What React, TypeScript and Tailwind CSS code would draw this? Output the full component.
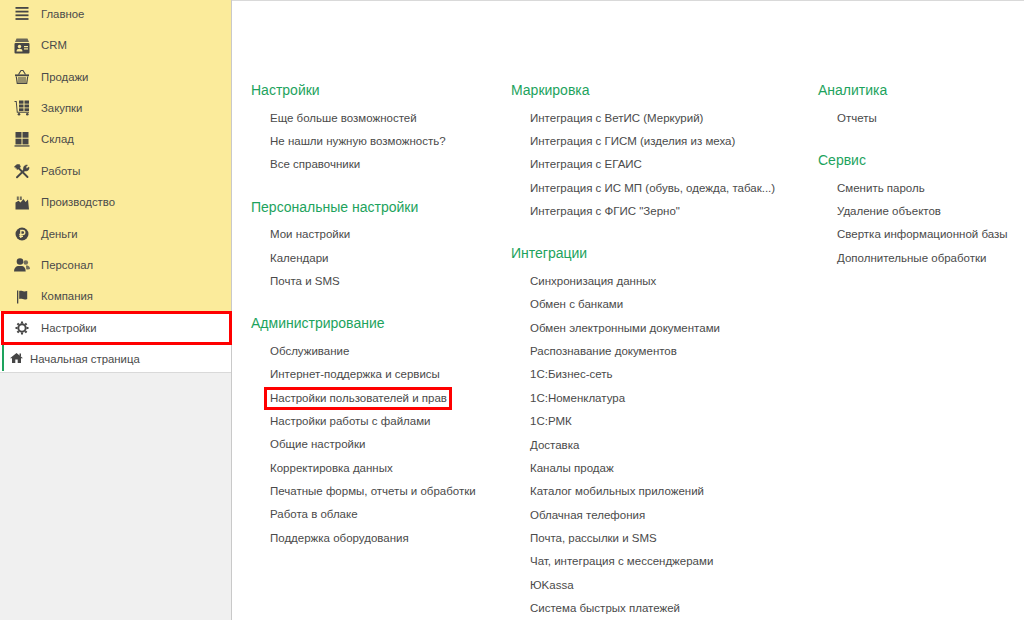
import type { ReactNode } from "react";

const ink = "#464646";
const bg = "#fbeb9b";

function MenuIcon() {
  return (
    <svg width="14" height="14" viewBox="0 0 14 14" fill={ink}>
      <rect x="0.500" y="0" width="13" height="1.800" />
      <rect x="0.500" y="3.700" width="13" height="1.800" />
      <rect x="0.500" y="7.400" width="13" height="1.800" />
      <rect x="0.500" y="11.100" width="13" height="1.800" />
    </svg>
  );
}

function CrmIcon() {
  return (
    <svg width="16" height="16" viewBox="0 0 16 16">
      <path d="M2.500 0.500h11l1.500 3.500H1z" fill={ink} opacity="0.8" />
      <rect x="0.500" y="5" width="15" height="10.500" rx="1" fill={ink} />
      <circle cx="5.500" cy="8.500" r="1.700" fill={bg} />
      <path d="M2.500 13.500c0-2.200 1.200-2.800 3-2.800s3 .6 3 2.800z" fill={bg} />
      <rect x="10" y="8" width="4" height="1.200" fill={bg} />
      <rect x="10" y="10.300" width="4" height="1.200" fill={bg} />
    </svg>
  );
}

function BasketIcon() {
  return (
    <svg width="16" height="16" viewBox="0 0 16 16" fill="none" stroke={ink}>
      <path d="M4.500 5.500L7 1.500h2l2.500 4" strokeWidth="1.100" />
      <path d="M1 6.300h14" strokeWidth="1.800" />
      <path d="M2.300 7.500l1 7h9.400l1-7" strokeWidth="1.200" />
      <path d="M5 8v6.500M7 8v6.500M9 8v6.500M11 8v6.500" strokeWidth="1.100" />
    </svg>
  );
}

function CartIcon() {
  return (
    <svg width="16" height="16" viewBox="0 0 16 16" fill={ink}>
      <path d="M0.500 1h2.200l1 10.800H15v1H2.800L1.800 2H0.500z" />
      <rect x="5" y="0.500" width="4.500" height="3.200" />
      <rect x="10.500" y="0.500" width="4.500" height="3.200" />
      <rect x="5" y="4.500" width="4.500" height="3" />
      <rect x="10.500" y="4.500" width="4.500" height="3" />
      <rect x="5" y="8.300" width="4.500" height="2.800" />
      <rect x="10.500" y="8.300" width="4.500" height="2.800" />
      <circle cx="5" cy="14.300" r="1.300" />
      <circle cx="13.300" cy="14.300" r="1.300" />
    </svg>
  );
}

function WarehouseIcon() {
  return (
    <svg width="16" height="15" viewBox="0 0 16 15" fill={ink}>
      <rect x="1.500" y="0" width="6" height="5.700" />
      <rect x="8.500" y="0" width="6" height="5.700" />
      <rect x="1.500" y="6.700" width="6" height="5.700" />
      <rect x="8.500" y="6.700" width="6" height="5.700" />
      <rect x="0.500" y="13.300" width="15" height="1.300" />
    </svg>
  );
}

function ToolsIcon() {
  return (
    <svg width="16" height="15" viewBox="0 0 16 15" fill="none" stroke={ink} strokeLinecap="round">
      <path d="M4 3.500L13.500 13" strokeWidth="1.900" />
      <path d="M11 5.500L3 13.300" strokeWidth="1.900" />
      <path d="M0.500 2.500L3 0.500h2.500L6.500 3l-3 2.500z" fill={ink} strokeWidth="0.500" />
      <path d="M9.500 6.500C8.800 3 10.500 .8 13.500 1l-1.700 2 1 1.500 2.200-1.500c.4 2.500-1 4.500-4 4z" fill={ink} strokeWidth="0.500" />
    </svg>
  );
}

function FactoryIcon() {
  return (
    <svg width="14" height="14" viewBox="0 0 14 14" fill={ink}>
      <rect x="1.800" y="0.500" width="2" height="3.500" opacity="0.75" />
      <rect x="4.800" y="0.500" width="2" height="3.500" opacity="0.75" />
      <path d="M0.500 13.500V6.500l3 -1.800 2 1.800 3-3.500 2 3 2.500-2.500 1 10z" />
    </svg>
  );
}

function MoneyIcon() {
  return (
    <svg width="14" height="14" viewBox="0 0 14 14">
      <circle cx="7" cy="7" r="6.500" fill={ink} />
      <path d="M5.800 11V3.500h2a2 2 0 0 1 0 4H4.300M4.300 9.300h3.700" fill="none" stroke={bg} strokeWidth="1.300" />
    </svg>
  );
}

function StaffIcon() {
  return (
    <svg width="16" height="14" viewBox="0 0 16 14" fill={ink}>
      <circle cx="11.800" cy="4.500" r="2.300" opacity="0.75" />
      <path d="M12 7.500h1.500c1.500.5 2.500 1.800 2.500 3.500-1 .5-2.500.5-3.800.2z" opacity="0.75" />
      <circle cx="6" cy="3.500" r="3.300" />
      <path d="M0 13.500c0-3.500 1.800-5 3.800-5.500h4.400c2 .5 3.500 2 3.500 5.500z" />
    </svg>
  );
}

function FlagIcon() {
  return (
    <svg width="14" height="14" viewBox="0 0 14 14" fill={ink}>
      <rect x="2" y="0.500" width="1.300" height="13" />
      <path d="M4.200 1c2-.7 3.400.4 5 .4 1 0 2-.4 3-.4v8c-1.800.8-3.200.6-4.500.1-1.500-.5-2.500-.4-3.500 0z" />
    </svg>
  );
}

function GearIcon() {
  const angles = [0, 45, 90, 135, 180, 225, 270, 315];
  return (
    <svg width="14" height="14" viewBox="0 0 14 14" fill="none" stroke={ink}>
      <circle cx="7" cy="7" r="3.700" strokeWidth="2" />
      {angles.map((a) => (
        <path key={a} d="M7 2.500V0.500" strokeWidth="2.100" transform={`rotate(${a} 7 7)`} />
      ))}
    </svg>
  );
}

function HomeIcon() {
  return (
    <svg width="13" height="10" viewBox="0 0 13 10" fill={ink}>
      <path d="M6.500 0L13 5.200h-2V10H7.700V6.500H5.300V10H2V5.200H0z" />
      <rect x="9.500" y="0.500" width="1.500" height="3" />
    </svg>
  );
}

type NavItem = { label: string; icon: ReactNode };

const navItems: NavItem[] = [
  { label: "Главное", icon: <MenuIcon /> },
  { label: "CRM", icon: <CrmIcon /> },
  { label: "Продажи", icon: <BasketIcon /> },
  { label: "Закупки", icon: <CartIcon /> },
  { label: "Склад", icon: <WarehouseIcon /> },
  { label: "Работы", icon: <ToolsIcon /> },
  { label: "Производство", icon: <FactoryIcon /> },
  { label: "Деньги", icon: <MoneyIcon /> },
  { label: "Персонал", icon: <StaffIcon /> },
  { label: "Компания", icon: <FlagIcon /> },
];

type Group = { title: string; items: string[] };

const col1: Group[] = [
  { title: "Настройки", items: ["Еще больше возможностей", "Не нашли нужную возможность?", "Все справочники"] },
  { title: "Персональные настройки", items: ["Мои настройки", "Календари", "Почта и SMS"] },
  {
    title: "Администрирование",
    items: [
      "Обслуживание",
      "Интернет-поддержка и сервисы",
      "Настройки пользователей и прав",
      "Настройки работы с файлами",
      "Общие настройки",
      "Корректировка данных",
      "Печатные формы, отчеты и обработки",
      "Работа в облаке",
      "Поддержка оборудования",
    ],
  },
];

const col2: Group[] = [
  {
    title: "Маркировка",
    items: [
      "Интеграция с ВетИС (Меркурий)",
      "Интеграция с ГИСМ (изделия из меха)",
      "Интеграция с ЕГАИС",
      "Интеграция с ИС МП (обувь, одежда, табак...)",
      'Интеграция с ФГИС "Зерно"',
    ],
  },
  {
    title: "Интеграции",
    items: [
      "Синхронизация данных",
      "Обмен с банками",
      "Обмен электронными документами",
      "Распознавание документов",
      "1С:Бизнес-сеть",
      "1С:Номенклатура",
      "1С:РМК",
      "Доставка",
      "Каналы продаж",
      "Каталог мобильных приложений",
      "Облачная телефония",
      "Почта, рассылки и SMS",
      "Чат, интеграция с мессенджерами",
      "ЮKassa",
      "Система быстрых платежей",
    ],
  },
];

const col3: Group[] = [
  { title: "Аналитика", items: ["Отчеты"] },
  {
    title: "Сервис",
    items: ["Сменить пароль", "Удаление объектов", "Свертка информационной базы", "Дополнительные обработки"],
  },
];

const highlighted = "Настройки пользователей и прав";

function Column({ groups, className }: { groups: Group[]; className: string }) {
  return (
    <div className={`flex flex-col gap-[19.8px] shrink-0 ${className}`}>
      {groups.map((group) => (
        <section key={group.title}>
          <h2 className="h-5 mb-[6.8px] text-[14px] leading-5 text-[#1da35d]">{group.title}</h2>
          {group.items.map((item) => (
            <div key={item} className="h-[23.35px] pl-[19px] text-[11.5px] leading-[23.35px] text-[#4a4a4a] whitespace-nowrap">
              {item === highlighted ? (
                <span className="relative inline-block">
                  {item}
                  <span className="absolute -left-[6px] -right-[5px] top-0 bottom-0 border-[3px] border-[#ff0000]" />
                </span>
              ) : (
                item
              )}
            </div>
          ))}
        </section>
      ))}
    </div>
  );
}

export default function App() {
  return (
    <div className="flex h-[620px] w-[1024px] overflow-hidden bg-white font-['Liberation_Sans',Arial,sans-serif]">
      <aside className="flex w-[232px] shrink-0 flex-col border-r border-[#c9c9c9] bg-[#f0f0f0]">
        <nav className="bg-[#fbeb9b]">
          {navItems.map((item, i) => (
            <div key={item.label} className={`flex h-[31.4px] items-center text-[11.35px] text-[#4a4a4a] ${i === 0 ? "-mt-[1.4px]" : ""}`}>
              <span className="flex w-[41px] shrink-0 justify-center pl-[2px]">{item.icon}</span>
              {item.label}
            </div>
          ))}
        </nav>
        <div className="relative -mt-[1.600px] flex h-[34px] items-center bg-white pt-[1px] text-[11.35px] text-[#4a4a4a]">
          <span className="flex w-[41px] shrink-0 justify-center pl-[2px]">
            <GearIcon />
          </span>
          Настройки
          <span className="absolute left-[1px] -right-[1px] inset-y-0 border-[3px] border-[#ff0000]" />
        </div>
        <div className="flex h-[28px] items-center border-b border-[#d9d9d9] bg-white text-[11.35px] text-[#4a4a4a]">
          <span className="ml-[2px] h-[26px] w-[2px] self-start bg-[#1da35d]" />
          <span className="ml-[6px] mr-[7px] flex"><HomeIcon /></span>
          <span className="pt-[3px]">Начальная страница</span>
        </div>
      </aside>
      <main className="flex flex-1 items-start border-t border-[#d9d9d9] pl-[19px] pt-[79px]">
        <Column groups={col1} className="w-[260px]" />
        <Column groups={col2} className="w-[307px]" />
        <Column groups={col3} className="w-[200px]" />
      </main>
    </div>
  );
}
